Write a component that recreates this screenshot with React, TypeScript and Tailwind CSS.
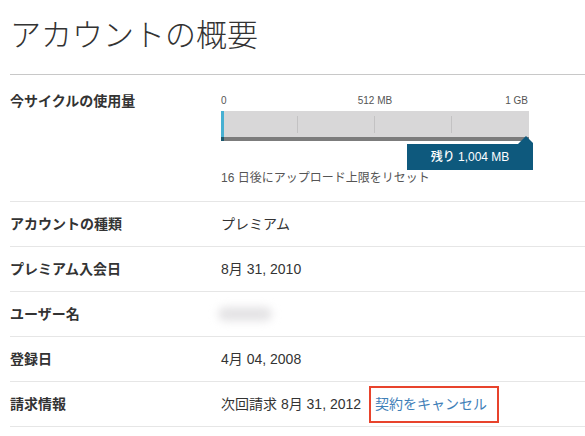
const rows = [
  { label: "アカウントの種類", value: "プレミアム" },
  { label: "プレミアム入会日", value: "8月 31, 2010" },
  { label: "ユーザー名", value: null },
  { label: "登録日", value: "4月 04, 2008" },
]

function UsageBar() {
  return (
    <div className="w-[308px]">
      <div className="grid grid-cols-3 text-[10px] leading-[12px] text-[#555]">
        <span className="text-left">0</span>
        <span className="text-center">512 MB</span>
        <span className="pr-px text-right">1 GB</span>
      </div>
      <div className="relative mt-[4px] flex h-[30px] flex-col">
        <div className="flex h-[26px] bg-[#d8d7d8]">
          {[0, 1, 2, 3].map((i) => (
            <div key={i} className="flex flex-1 items-center justify-end">
              {i < 3 && <div className="h-[17px] w-px bg-[#c3c2c3]" />}
            </div>
          ))}
        </div>
        <div className="h-[4px] bg-[#7c7c7c]" />
        <div className="absolute left-0 top-0 flex h-full w-[3px] flex-col">
          <div className="h-[26px] bg-[#47b0d2]" />
          <div className="h-[4px] bg-[#1d5a70]" />
        </div>
      </div>
      <div className="mr-[-4px] mt-[3px] flex justify-end">
        <div className="relative flex h-[26px] w-[126px] items-center justify-center bg-[#0e597d] text-[12px] font-medium text-white">
          残り 1,004 MB
          <svg
            className="absolute right-0 top-[-8px]"
            width="15"
            height="8"
            viewBox="0 0 15 8"
          >
            <polygon points="0,8 8,0 15,7 15,8" fill="#0e597d" />
          </svg>
        </div>
      </div>
      <p className="text-[12px] leading-[16px] text-[#555]">
        16 日後にアップロード上限をリセット
      </p>
    </div>
  )
}

export default function App() {
  return (
    <div
      className="min-h-[436px] bg-white pl-[10px] text-[#333]"
      style={{ fontFamily: '"Liberation Sans", "Noto Sans CJK JP", sans-serif' }}
    >
      <h1 className="h-[75px] border-b border-[#c8c8c8] pt-[16px] text-[31px] font-light leading-[40px]">
        アカウントの概要
      </h1>

      <div className="grid grid-cols-[211px_1fr] border-b border-[#e6e6e6] pb-[15px] pt-[20px]">
        <div className="text-[14px] font-bold leading-[12px]">今サイクルの使用量</div>
        <UsageBar />
      </div>

      {rows.map((row) => (
        <div
          key={row.label}
          className="grid h-[45px] grid-cols-[211px_1fr] items-center border-b border-[#e6e6e6] text-[14px]"
        >
          <div className="font-bold">{row.label}</div>
          {row.value ? (
            <div>{row.value}</div>
          ) : (
            <div className="ml-[-3px] h-[14px] w-[54px] rounded-full bg-[#e4e3e5] blur-[4px]" />
          )}
        </div>
      ))}

      <div className="grid h-[45px] grid-cols-[211px_1fr] items-center border-b border-[#e6e6e6] text-[14px]">
        <div className="font-bold">請求情報</div>
        <div className="flex items-center gap-[8px]">
          <span>次回請求 8月 31, 2012</span>
          <a
            href="#"
            className="flex h-[37px] items-center border-2 border-[#e8432c] pl-[4px] pr-[10px] text-[#3f80b8]"
          >
            契約をキャンセル
          </a>
        </div>
      </div>
    </div>
  )
}
